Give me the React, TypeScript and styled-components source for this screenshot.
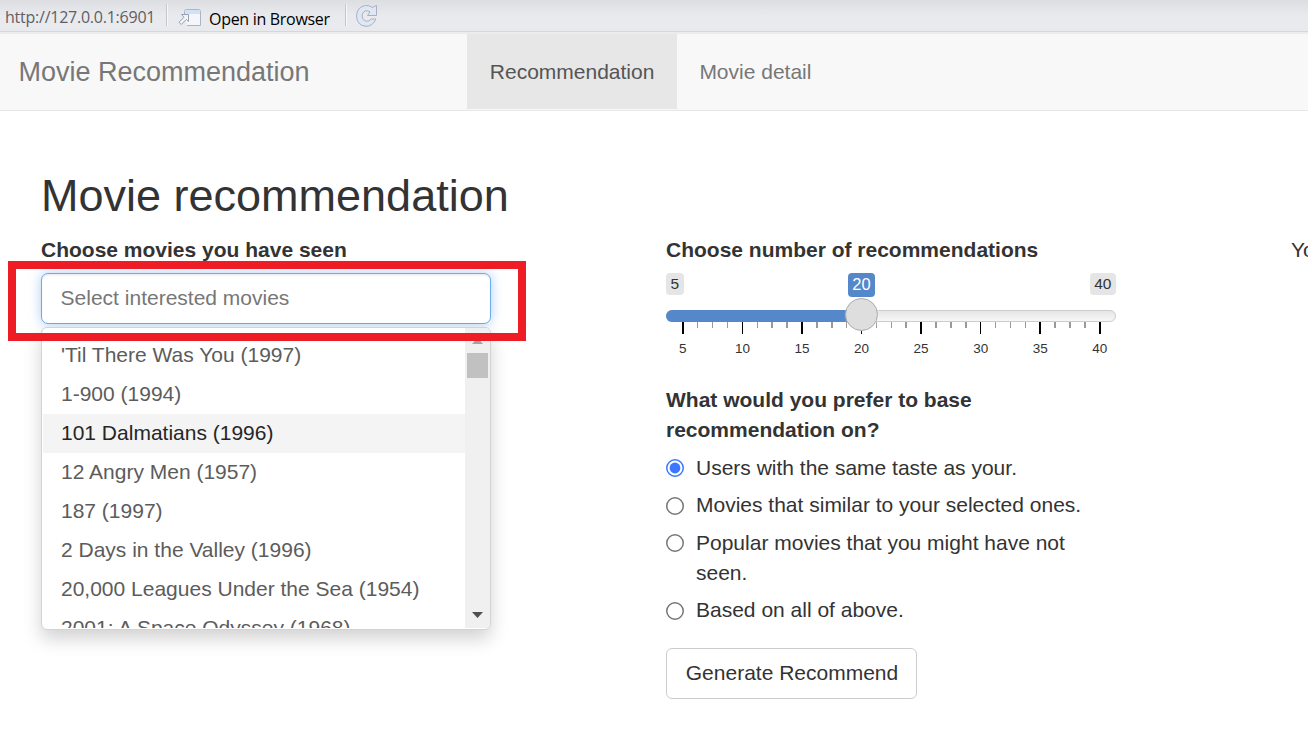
import React from 'react';
import styled, { createGlobalStyle } from 'styled-components';

const GlobalStyle = createGlobalStyle`
  *, *::before, *::after { box-sizing: border-box; }
  html, body { margin: 0; padding: 0; background: #fff; }
  body {
    overflow: hidden;
    font-family: "Liberation Sans", Arial, sans-serif;
    font-size: 21px;
    line-height: 30px;
    color: #333;
  }
`;

const Page = styled.div`
  width: 1308px;
  height: 754px;
  overflow: hidden;
  background: #fff;
`;

const ViewerBar = styled.div`
  display: flex;
  height: 34px;
  padding-left: 5px;
  background: linear-gradient(#dddee2 0, #e4e5e9 9px, #e9eaee 16px, #e9eaee 31px, #d4d8dd 31px, #d4d8dd 32px, #ebecf0 32px);
  font-family: "Open Sans", "Noto Sans", sans-serif;
  font-size: 16px;
  line-height: 22px;
  white-space: nowrap;
`;

const Address = styled.span`
  width: 161px;
  padding-top: 6px;
  color: #5f6063;
  letter-spacing: -0.24px;
`;

const Divider = styled.span`
  width: 2px;
  height: 22px;
  margin-top: 4px;
  background: linear-gradient(90deg, #c4c6ca 50%, #f7f7f9 50%);
`;

const ViewerButton = styled.button`
  display: flex;
  width: 177px;
  padding: 0 0 0 10px;
  border: 0;
  background: none;
  color: #000;
  font: inherit;
  letter-spacing: -0.3px;
  text-align: left;

  svg { flex: none; margin: 8px 7px 0 0; }
  span { padding-top: 8px; }
`;

const RefreshButton = styled.button`
  padding: 3px 0 0 8px;
  border: 0;
  background: none;
  display: flex;
`;

const Navbar = styled.nav`
  display: flex;
  height: 77px;
  background: #f8f8f8;
  border-bottom: 1px solid #e7e7e7;
`;

const Brand = styled.a`
  width: 467px;
  padding: 23px 0 0 18.5px;
  font-size: 27px;
  color: #777;
`;

const NavItem = styled.a<{ $active?: boolean }>`
  height: 75px;
  padding: 23px 22.2px 0 22.8px;
  color: ${({ $active }) => ($active ? '#555' : '#777')};
  background: ${({ $active }) => ($active ? '#e7e7e7' : 'transparent')};
`;

const Content = styled.main`
  padding: 60px 0 0 41px;
`;

const Title = styled.h2`
  margin: 0 0 14px;
  font-size: 45px;
  line-height: 50px;
  font-weight: 400;
`;

const Columns = styled.div`
  display: grid;
  grid-template-columns: 450px 450px 450px;
  column-gap: 175px;
`;

const Label = styled.label`
  display: block;
  height: 30px;
  font-weight: 700;
`;

const Picker = styled.div`
  position: relative;
  margin-top: 8px;
`;

const SearchBox = styled.div`
  height: 51px;
  padding: 9px 18.6px;
  border: 1px solid #6cabec;
  border-radius: 7px;
  background: #fff;
  color: #777;
  box-shadow: inset 0 1.5px 1.5px rgba(0, 0, 0, 0.075), 0 0 12px rgba(102, 165, 233, 0.55);
`;

const Highlight = styled.div`
  position: absolute;
  z-index: 3;
  left: -33px;
  top: -12px;
  width: 518px;
  height: 80px;
  border: 8px solid #ee1c24;
`;

const Dropdown = styled.div`
  position: absolute;
  z-index: 2;
  top: 54px;
  left: 0;
  width: 450px;
  height: 303px;
  display: flex;
  overflow: hidden;
  padding: 0 0 0 1px;
  border: 1px solid #d3d3d3;
  border-radius: 6px;
  background: #fff;
  box-shadow: 0 9px 18px rgba(0, 0, 0, 0.175);
`;

const OptionList = styled.div`
  flex: 1;
  height: 300px;
  padding-top: 8px;
  overflow: hidden;
`;

const Option = styled.div<{ $active?: boolean }>`
  height: 39px;
  padding: 4px 18px 5px;
  color: ${({ $active }) => ($active ? '#262626' : '#5c5c5c')};
  background: ${({ $active }) => ($active ? '#f4f4f4' : 'transparent')};
`;

const Scrollbar = styled.div`
  display: flex;
  flex-direction: column;
  align-items: flex-start;
  width: 25px;
  height: 300px;
  padding: 10px 0 10px 2px;
  background: #f0f0f0;

  svg { margin-left: 5px; }
`;

const Thumb = styled.div`
  width: 21px;
  height: 25px;
  margin: 9px 0 auto;
  background: #c1c1c1;
`;

const Slider = styled.div`
  margin-top: 8px;
  height: 87px;
`;

const SliderValues = styled.div`
  display: flex;
  justify-content: space-between;
  align-items: flex-start;
  height: 37px;
`;

const Bound = styled.span`
  height: 22px;
  padding: 0 4.5px;
  border-radius: 4px;
  background: #e5e5e5;
  font-size: 15.5px;
  line-height: 22px;
`;

const Rail = styled.div`
  position: relative;
  height: 12px;
  border: 1px solid #ccc;
  border-radius: 6px;
  background: linear-gradient(#dedede -50%, #fff 150%);
`;

const Fill = styled.div`
  width: 196px;
  height: 12px;
  margin: -1px;
  border-radius: 6px 0 0 6px;
  background: #5488cb;
`;

const Handle = styled.div`
  position: absolute;
  z-index: 1;
  top: -13px;
  left: 178px;
  width: 33px;
  height: 33px;
  border: 1px solid #ababab;
  border-radius: 50%;
  background: #dedede;
  box-shadow: 1px 1px 3px rgba(255, 255, 255, 0.3);
`;

const Bubble = styled.span`
  position: absolute;
  top: -38px;
  left: 181px;
  width: 27px;
  height: 24px;
  border-radius: 4px;
  background: #5488cb;
  color: #fff;
  font-size: 16.5px;
  line-height: 23px;
  text-align: center;
`;

const Scale = styled.div`
  display: flex;
  justify-content: space-between;
  width: 418.46px;
  margin-left: 16.1px;
`;

const Tick = styled.div`
  display: flex;
  flex-direction: column;
  align-items: center;
  width: 1.5px;
  font-size: 13.5px;
  line-height: 16px;
`;

const TickMark = styled.i<{ $major: boolean }>`
  width: 1.5px;
  height: ${({ $major }) => ($major ? '12px' : '6px')};
  margin-bottom: 7px;
  background: ${({ $major }) => ($major ? '#000' : '#999')};
`;

const Question = styled.div`
  width: 340px;
  margin-top: 25px;
  font-weight: 700;
`;

const RadioList = styled.div`
  display: flex;
  flex-direction: column;
  gap: 7.5px;
  margin-top: 7.8px;
`;

const RadioRow = styled.label`
  display: flex;
  width: 420px;

  svg { flex: none; margin: 6.4px 12px 0 0; }
`;

const GenerateButton = styled.button`
  height: 51px;
  width: 251px;
  margin-top: 22.7px;
  padding: 0 0 1px 1px;
  border: 1px solid #ccc;
  border-radius: 6px;
  background: #fff;
  color: #333;
  font: inherit;
`;

const ResultText = styled.div`
  white-space: nowrap;
`;

const movies = [
  "'Til There Was You (1997)",
  '1-900 (1994)',
  '101 Dalmatians (1996)',
  '12 Angry Men (1957)',
  '187 (1997)',
  '2 Days in the Valley (1996)',
  '20,000 Leagues Under the Sea (1954)',
  '2001: A Space Odyssey (1968)',
];

const bases = [
  'Users with the same taste as your.',
  'Movies that similar to your selected ones.',
  'Popular movies that you might have not seen.',
  'Based on all of above.',
];

const ticks = Array.from({ length: 29 }, (_, i) => i);

const OpenIcon = () => (
  <svg width="24" height="20" viewBox="0 0 24 20" fill="none">
    <path d="M6.500 6V3.500Q6.500 1.500 8.500 1.500H20.500Q22.500 1.500 22.500 3.500V17.500H9" fill="#f4f6fa" stroke="#a9b4c4" />
    <path d="M7 6V3.500Q7 2 8.500 2H20.500Q22 2 22 3.500V6Z" fill="#cfe2f8" />
    <path d="M3.500 6.500H10.500V13.500L8.300 11.400L3.300 16.500L1 14.300L6 9.200Z" fill="#f1f3f6" stroke="#98a3b2" />
  </svg>
);

const RefreshIcon = () => (
  <svg width="24" height="26" viewBox="0 0 24 26" fill="none">
    <path
      d="M17.300 4.500L21.500 2.500V12.500H12.500L15 8.800Q12.500 7.200 10 8Q7 9.200 7 13Q7.200 17.300 11 18.200Q14 18.600 16.300 16H20.800Q18 23.300 11 23.300Q2 22.600 1.500 13Q2 3.800 10.500 2.500Q14.500 2.200 17.300 4.500Z"
      fill="#dfe7f5"
      stroke="#a9b0bf"
    />
  </svg>
);

const RadioMark = ({ checked }: { checked: boolean }) => (
  <svg width="18" height="18" viewBox="0 0 18 18" fill="none">
    <circle cx="9" cy="9" r="8.250" fill="#fff" stroke={checked ? '#3b78ff' : '#767676'} strokeWidth="1.500" />
    {checked && <circle cx="9" cy="9" r="5.400" fill="#3b78ff" />}
  </svg>
);

export default function App() {
  return (
    <Page>
      <GlobalStyle />
      <ViewerBar>
        <Address>http://127.0.0.1:6901</Address>
        <Divider />
        <ViewerButton>
          <OpenIcon />
          <span>Open in Browser</span>
        </ViewerButton>
        <Divider />
        <RefreshButton aria-label="Refresh">
          <RefreshIcon />
        </RefreshButton>
      </ViewerBar>
      <Navbar>
        <Brand>Movie Recommendation</Brand>
        <NavItem $active>Recommendation</NavItem>
        <NavItem>Movie detail</NavItem>
      </Navbar>
      <Content>
        <Title>Movie recommendation</Title>
        <Columns>
          <section>
            <Label>Choose movies you have seen</Label>
            <Picker>
              <SearchBox>Select interested movies</SearchBox>
              <Dropdown>
                <OptionList>
                  {movies.map((movie, i) => (
                    <Option key={movie} $active={i === 2}>{movie}</Option>
                  ))}
                </OptionList>
                <Scrollbar>
                  <svg width="12" height="6" viewBox="0 0 12 6"><path d="M0 6L5.500 0L11 6Z" fill="#a3a3a3" /></svg>
                  <Thumb />
                  <svg width="12" height="6" viewBox="0 0 12 6"><path d="M0 0H11L5.500 6Z" fill="#505050" /></svg>
                </Scrollbar>
              </Dropdown>
              <Highlight />
            </Picker>
          </section>
          <section>
            <Label>Choose number of recommendations</Label>
            <Slider>
              <SliderValues>
                <Bound>5</Bound>
                <Bound>40</Bound>
              </SliderValues>
              <Rail>
                <Fill />
                <Handle />
                <Bubble>20</Bubble>
              </Rail>
              <Scale>
                {ticks.map((i) => (
                  <Tick key={i}>
                    <TickMark $major={i % 4 === 0} />
                    {i % 4 === 0 && <span>{5 + (i / 4) * 5}</span>}
                  </Tick>
                ))}
              </Scale>
            </Slider>
            <Question>What would you prefer to base recommendation on?</Question>
            <RadioList>
              {bases.map((text, i) => (
                <RadioRow key={text}>
                  <RadioMark checked={i === 0} />
                  <span>{text}</span>
                </RadioRow>
              ))}
            </RadioList>
            <GenerateButton>Generate Recommend</GenerateButton>
          </section>
          <ResultText>You</ResultText>
        </Columns>
      </Content>
    </Page>
  );
}
